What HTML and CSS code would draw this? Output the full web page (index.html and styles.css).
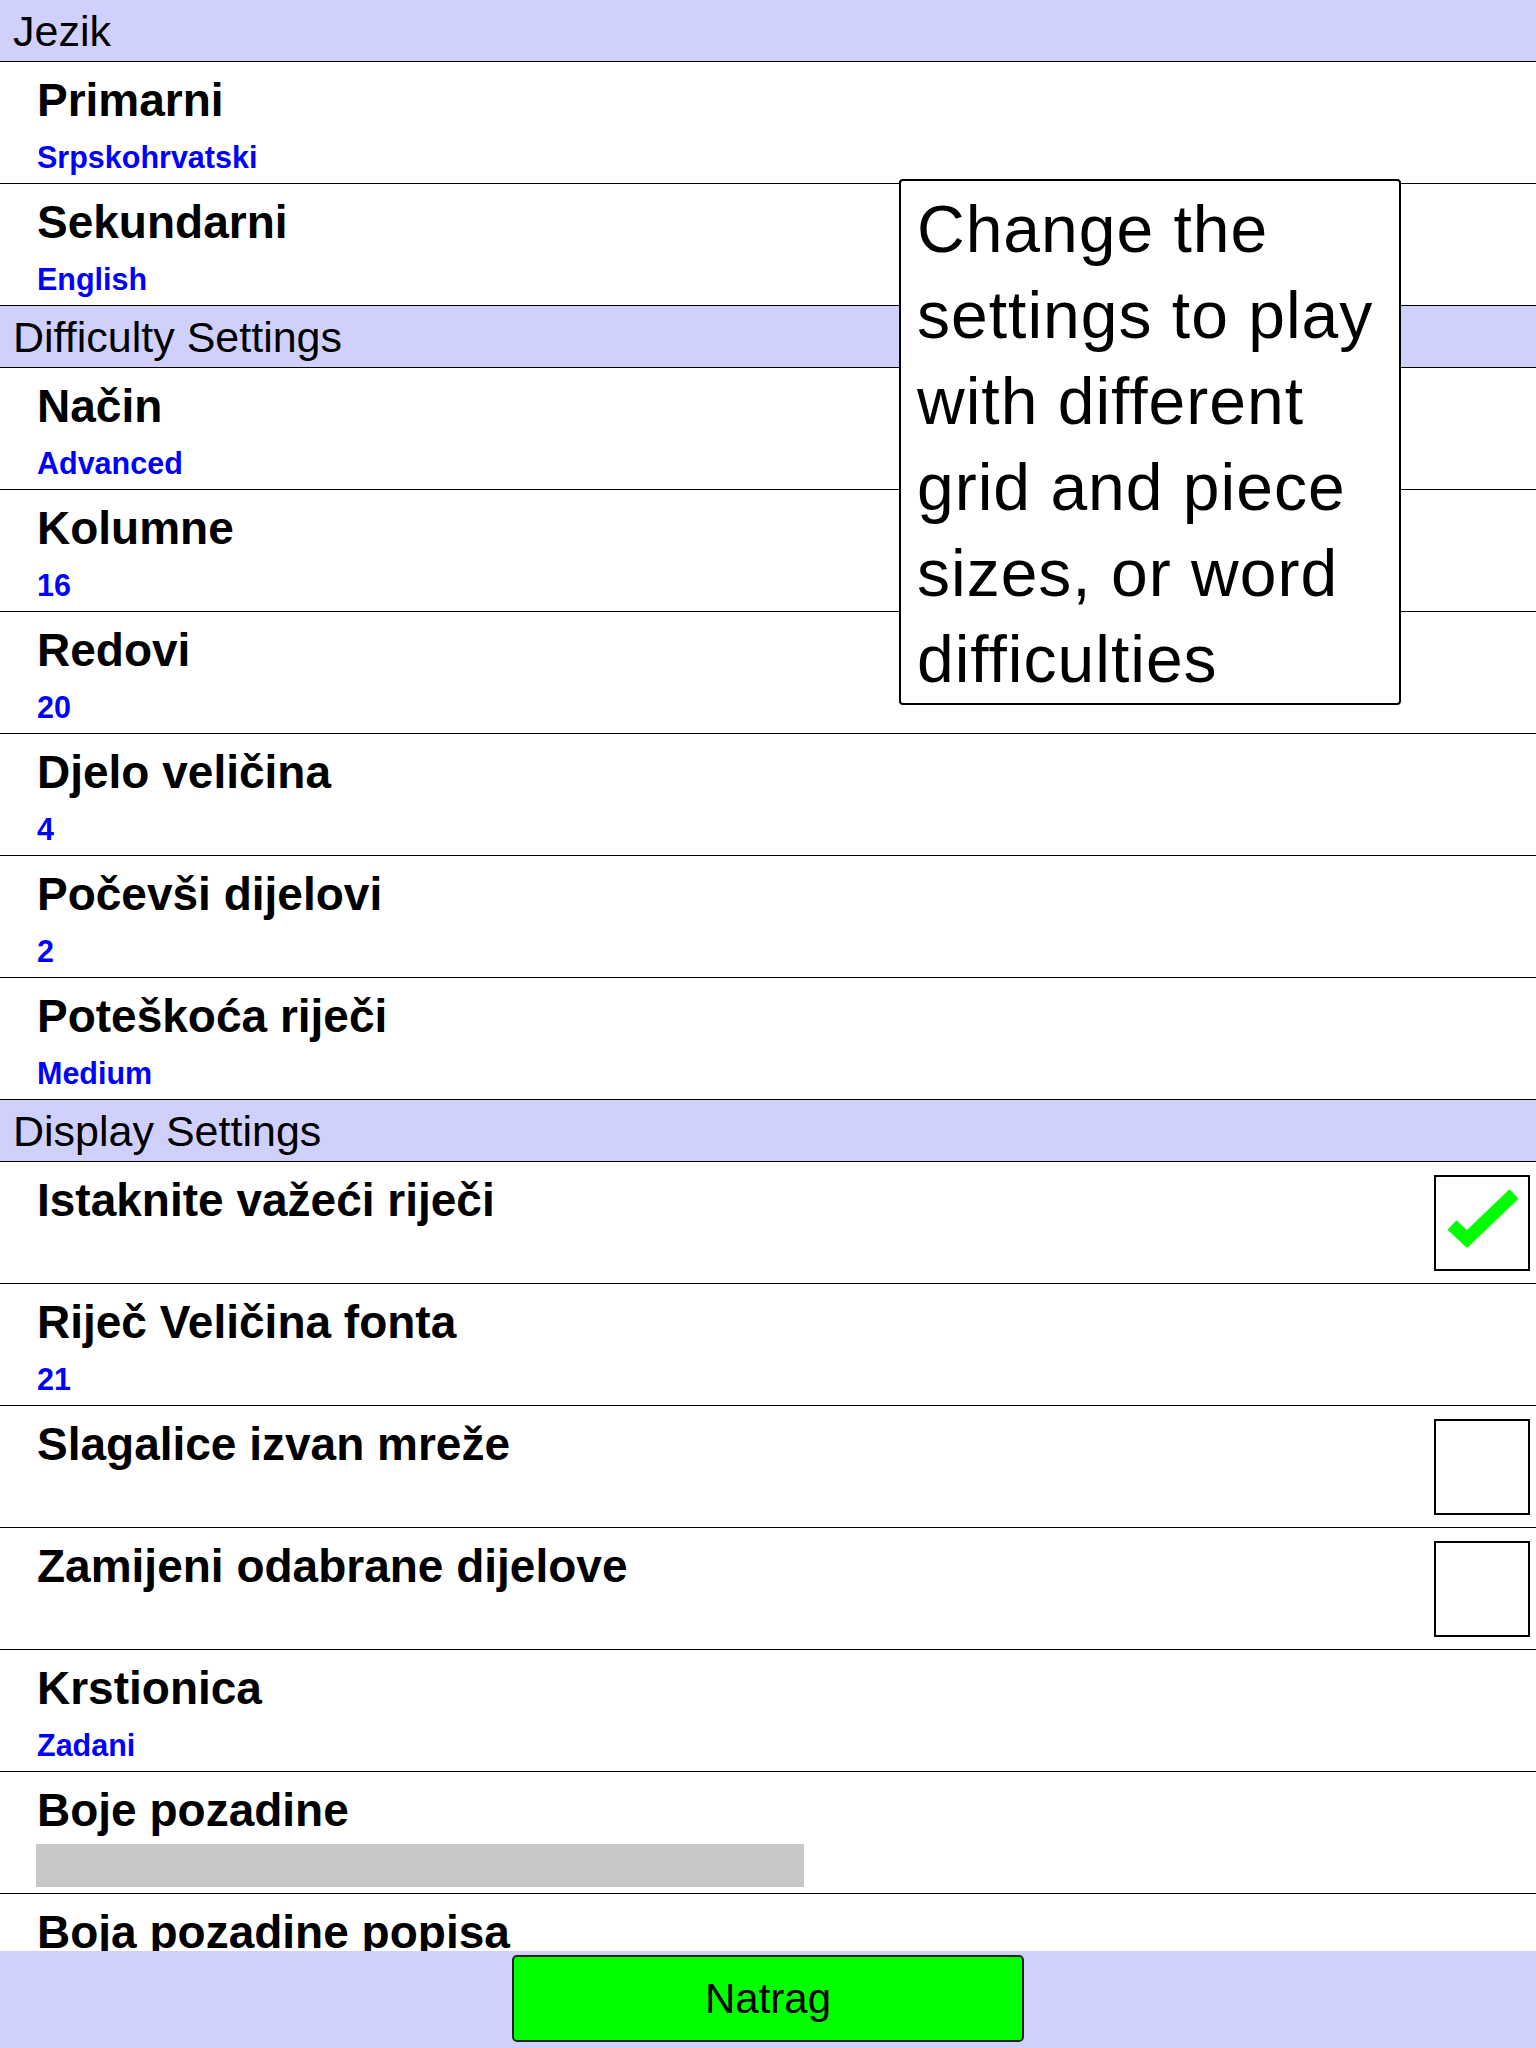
FILE: index.html
```html
<!DOCTYPE html>
<html lang="hr">
<head>
<meta charset="utf-8">
<title>Postavke</title>
<link rel="stylesheet" href="styles.css">
</head>
<body>
<div class="screen">
  <div class="list">
    <div class="section">Jezik</div>
    <div class="row"><div class="text"><div class="label">Primarni</div><div class="value">Srpskohrvatski</div></div></div>
    <div class="row"><div class="text"><div class="label">Sekundarni</div><div class="value">English</div></div></div>

    <div class="section">Difficulty Settings</div>
    <div class="row"><div class="text"><div class="label">Način</div><div class="value">Advanced</div></div></div>
    <div class="row"><div class="text"><div class="label">Kolumne</div><div class="value">16</div></div></div>
    <div class="row"><div class="text"><div class="label">Redovi</div><div class="value">20</div></div></div>
    <div class="row"><div class="text"><div class="label">Djelo veličina</div><div class="value">4</div></div></div>
    <div class="row"><div class="text"><div class="label">Počevši dijelovi</div><div class="value">2</div></div></div>
    <div class="row"><div class="text"><div class="label">Poteškoća riječi</div><div class="value">Medium</div></div></div>

    <div class="section">Display Settings</div>
    <div class="row">
      <div class="text"><div class="label">Istaknite važeći riječi</div></div>
      <div class="check">
        <svg viewBox="0 0 92 92" width="92" height="92"><polyline points="16,48 31,62 78,17" fill="none" stroke="#00ff00" stroke-width="13" stroke-linejoin="miter" stroke-linecap="butt"/></svg>
      </div>
    </div>
    <div class="row"><div class="text"><div class="label">Riječ Veličina fonta</div><div class="value">21</div></div></div>
    <div class="row">
      <div class="text"><div class="label">Slagalice izvan mreže</div></div>
      <div class="check"></div>
    </div>
    <div class="row">
      <div class="text"><div class="label">Zamijeni odabrane dijelove</div></div>
      <div class="check"></div>
    </div>
    <div class="row"><div class="text"><div class="label">Krstionica</div><div class="value">Zadani</div></div></div>
    <div class="row"><div class="text"><div class="label">Boje pozadine</div><div class="swatch"></div></div></div>
    <div class="row"><div class="text"><div class="label">Boja pozadine popisa</div><div class="swatch swatch-white"></div></div></div>
  </div>

  <div class="footer">
    <button class="back">Natrag</button>
  </div>

  <div class="tooltip">Change the settings to play with different grid and piece sizes, or word difficulties</div>
</div>
</body>
</html>
```

FILE: styles.css
```css
html, body {
  margin: 0;
  padding: 0;
  height: 100%;
  overflow: hidden;
  background: #ffffff;
}

body {
  font-family: "Liberation Sans", Arial, Helvetica, sans-serif;
  color: #000;
}

.screen {
  position: relative;
  height: 2048px;
  display: flex;
  flex-direction: column;
  overflow: hidden;
}

.list {
  flex: 1;
  overflow: hidden;
  min-height: 0;
}

.section {
  height: 62px;
  box-sizing: border-box;
  background: #d0d0fc;
  border-bottom: 1px solid #000;
  font-size: 43px;
  line-height: 62px;
  padding-left: 13px;
}

.row {
  height: 122px;
  box-sizing: border-box;
  border-bottom: 1px solid #000;
  display: flex;
  align-items: flex-start;
}

.text {
  flex: 1;
  padding: 12px 0 0 37px;
}

.label {
  font-weight: bold;
  font-size: 46px;
  line-height: 52px;
  white-space: nowrap;
}

.value {
  font-weight: bold;
  font-size: 30.5px;
  line-height: 36px;
  margin-top: 13px;
  color: #0000ff;
}

.swatch {
  width: 768px;
  height: 43px;
  margin-top: 8px;
  margin-left: -1px;
  background: #c8c8c8;
}

.swatch-white {
  background: #ffffff;
}

.check {
  width: 96px;
  height: 96px;
  box-sizing: border-box;
  border: 2px solid #000;
  margin: 13px 6px 0 0;
  background: #fff;
}

.check svg {
  display: block;
}

.footer {
  height: 97px;
  flex: none;
  background: #d0d0fc;
  display: flex;
  justify-content: center;
  align-items: flex-start;
  padding-top: 4px;
  box-sizing: border-box;
}

.back {
  width: 512px;
  height: 87px;
  background: #00ff00;
  border: 2px solid #222;
  border-radius: 5px;
  font-family: "Liberation Sans", Arial, Helvetica, sans-serif;
  font-size: 42px;
  color: #000;
  padding: 0;
}

.tooltip {
  position: absolute;
  left: 899px;
  top: 179px;
  width: 502px;
  box-sizing: border-box;
  background: #fff;
  border: 2px solid #000;
  border-radius: 4px;
  padding: 5px 12px 1px 16px;
  font-size: 66px;
  line-height: 86px;
  letter-spacing: 1px;
}
```
